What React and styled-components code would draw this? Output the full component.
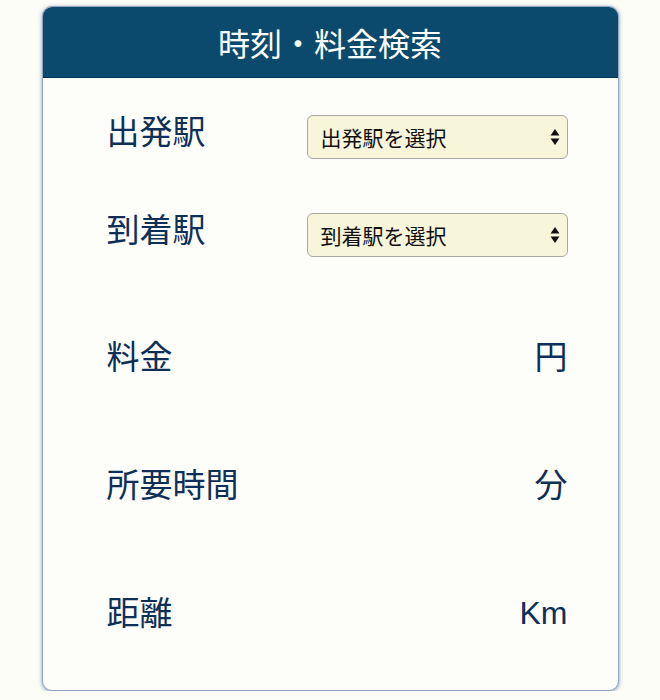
import styled, { createGlobalStyle } from "styled-components";

const GlobalStyle = createGlobalStyle`
  html, body {
    margin: 0;
    padding: 0;
    background: #fdfdf7;
  }
  body {
    font-family: "Noto Sans CJK JP", "Noto Sans", sans-serif;
  }
`;

const Page = styled.div`
  padding-top: 6px;
  display: flex;
  justify-content: center;
`;

const Panel = styled.section`
  width: 577px;
  height: 685px;
  box-sizing: border-box;
  border: 1px solid #93a6c2;
  border-radius: 10px;
  box-shadow: 0 1px 4px rgba(60, 95, 150, 0.6);
  background: #fdfdf9;
  overflow: hidden;
  display: flex;
  flex-direction: column;
`;

const Header = styled.h1`
  margin: 0;
  height: 70px;
  background: #0b4a6c;
  border-bottom: 1px solid #05305a;
  color: #ffffff;
  font-size: 32px;
  font-weight: 400;
  display: flex;
  align-items: center;
  justify-content: center;
`;

const Body = styled.div`
  display: flex;
  flex-direction: column;
  padding: 10px 50px 0 64px;
`;

const Row = styled.div`
  display: flex;
  align-items: center;
  justify-content: space-between;
  height: ${(p) => p.$h}px;
  margin-top: ${(p) => p.$mt || 0}px;
`;

const Label = styled.span`
  color: #0e2f57;
  font-size: 33px;
  line-height: 1;
  position: relative;
  top: ${(p) => p.$top ?? -3}px;
`;

const Unit = styled(Label)`
  font-family: ${(p) =>
    p.$latin ? '"Liberation Sans", sans-serif' : '"Noto Sans CJK JP", sans-serif'};
  font-size: ${(p) => (p.$latin ? 32 : 33)}px;
  top: ${(p) => (p.$latin ? -1 : -3)}px;
`;

const SelectWrap = styled.div`
  position: relative;
  width: 261px;
  height: 44px;
`;

const Select = styled.select`
  appearance: none;
  -webkit-appearance: none;
  width: 100%;
  height: 100%;
  box-sizing: border-box;
  border: 1px solid #a9a9a2;
  border-radius: 6px;
  background: #f7f5da;
  color: #111;
  font-family: "Noto Sans CJK JP", sans-serif;
  font-size: 21px;
  padding: 0 30px 0 13px;
  outline: none;
`;

const Arrows = styled.svg`
  position: absolute;
  right: 8px;
  top: 50%;
  transform: translateY(-50%);
  pointer-events: none;
`;

const StationSelect = ({ placeholder }) => (
  <SelectWrap>
    <Select defaultValue="">
      <option value="">{placeholder}</option>
    </Select>
    <Arrows width="10" height="18" viewBox="0 0 10 18">
      <path d="M5 1 L9.5 7.5 H0.5 Z" fill="#111" />
      <path d="M5 17 L9.5 10.5 H0.5 Z" fill="#111" />
    </Arrows>
  </SelectWrap>
);

const results = [
  { label: "料金", unit: "円" },
  { label: "所要時間", unit: "分" },
  { label: "距離", unit: "Km", latin: true },
];

export default function App() {
  return (
    <>
      <GlobalStyle />
      <Page>
        <Panel>
          <Header>時刻・料金検索</Header>
          <Body>
            <Row $h={98}>
              <Label $top={-7}>出発駅</Label>
              <StationSelect placeholder="出発駅を選択" />
            </Row>
            <Row $h={98}>
              <Label $top={-7}>到着駅</Label>
              <StationSelect placeholder="到着駅を選択" />
            </Row>
            {results.map((r, i) => (
              <Row key={r.label} $h={128} $mt={i === 0 ? 10 : 0}>
                <Label>{r.label}</Label>
                <Unit $latin={r.latin}>{r.unit}</Unit>
              </Row>
            ))}
          </Body>
        </Panel>
      </Page>
    </>
  );
}
